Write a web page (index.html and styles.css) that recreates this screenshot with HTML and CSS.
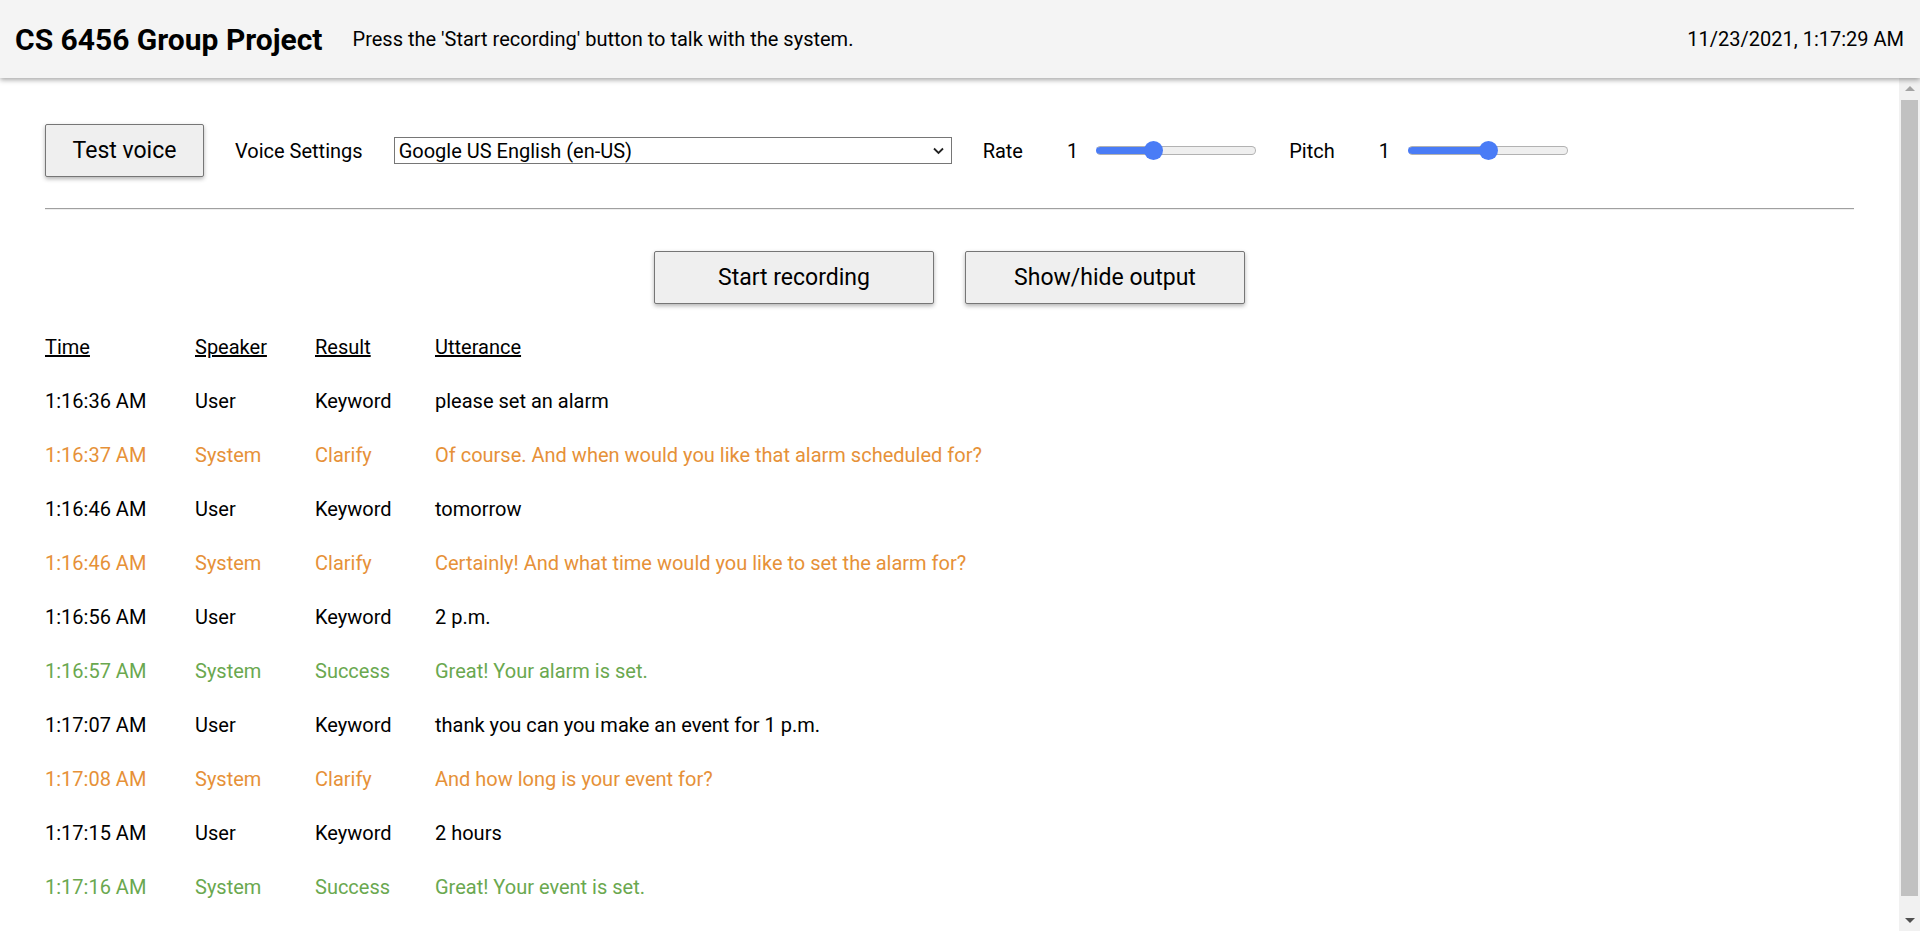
FILE: index.html
```html
<!DOCTYPE html>
<html lang="en">
<head>
<meta charset="utf-8">
<title>CS 6456 Group Project</title>
<link rel="stylesheet" href="styles.css">
</head>
<body>
<header class="topbar">
  <h1 class="title">CS 6456 Group Project</h1>
  <p class="subtitle">Press the 'Start recording' button to talk with the system.</p>
  <span class="clock">11/23/2021, 1:17:29 AM</span>
</header>
<div class="main">
  <main class="content">
    <div class="controls">
      <button class="btn btn-test">Test voice</button>
      <span class="label">Voice Settings</span>
      <div class="select">
        <span class="select-text">Google US English (en-US)</span>
        <svg class="chev" width="11" height="8" viewBox="0 0 11 8"><path d="M1 1.5 L5.5 6 L10 1.5" fill="none" stroke="#222" stroke-width="1.8"/></svg>
      </div>
      <div class="param">
        <span class="label">Rate</span>
        <span class="value">1</span>
        <input class="slider" type="range" min="0.5" max="2" step="0.1" value="1" style="--p: 57px">
      </div>
      <div class="param">
        <span class="label">Pitch</span>
        <span class="value">1</span>
        <input class="slider" type="range" min="0" max="2" step="0.1" value="1" style="--p: 80px">
      </div>
    </div>
    <hr class="rule">
    <div class="actions">
      <button class="btn btn-wide">Start recording</button>
      <button class="btn btn-wide">Show/hide output</button>
    </div>
    <div class="log">
      <div class="row head"><span>Time</span><span>Speaker</span><span>Result</span><span>Utterance</span></div>
      <div class="row"><span>1:16:36 AM</span><span>User</span><span>Keyword</span><span>please set an alarm</span></div>
      <div class="row clarify"><span>1:16:37 AM</span><span>System</span><span>Clarify</span><span>Of course. And when would you like that alarm scheduled for?</span></div>
      <div class="row"><span>1:16:46 AM</span><span>User</span><span>Keyword</span><span>tomorrow</span></div>
      <div class="row clarify"><span>1:16:46 AM</span><span>System</span><span>Clarify</span><span>Certainly! And what time would you like to set the alarm for?</span></div>
      <div class="row"><span>1:16:56 AM</span><span>User</span><span>Keyword</span><span>2 p.m.</span></div>
      <div class="row success"><span>1:16:57 AM</span><span>System</span><span>Success</span><span>Great! Your alarm is set.</span></div>
      <div class="row"><span>1:17:07 AM</span><span>User</span><span>Keyword</span><span>thank you can you make an event for 1 p.m.</span></div>
      <div class="row clarify"><span>1:17:08 AM</span><span>System</span><span>Clarify</span><span>And how long is your event for?</span></div>
      <div class="row"><span>1:17:15 AM</span><span>User</span><span>Keyword</span><span>2 hours</span></div>
      <div class="row success"><span>1:17:16 AM</span><span>System</span><span>Success</span><span>Great! Your event is set.</span></div>
    </div>
  </main>
  <div class="vscroll" aria-hidden="true">
    <div class="sb-btn"><span class="arrow-up"></span></div>
    <div class="sb-track"><div class="sb-thumb"></div></div>
    <div class="sb-btn"><span class="arrow-down"></span></div>
  </div>
</div>
</body>
</html>
```
FILE: styles.css
```css
* { box-sizing: border-box; }
html, body { height: 100%; }
body {
  margin: 0;
  font-family: Roboto, "Liberation Sans", sans-serif;
  color: #000;
  background: #fff;
  display: flex;
  flex-direction: column;
  overflow: hidden;
}
.topbar {
  position: relative;
  z-index: 2;
  flex: 0 0 78px;
  height: 78px;
  background: #f4f4f4;
  display: flex;
  align-items: center;
  padding: 0 16px 0 15px;
  box-shadow: 0 2px 5px rgba(0,0,0,0.35);
}
.title {
  margin: 0 30px 0 0;
  font-size: 30px;
  font-weight: 700;
}
.subtitle {
  margin: 0;
  font-size: 20px;
}
.clock {
  margin-left: auto;
  font-size: 20px;
}
.main {
  flex: 1 1 auto;
  min-height: 0;
  display: flex;
}
.content {
  flex: 1 1 auto;
  overflow: hidden;
  padding: 46px 0 46px 45px;
}
.vscroll {
  flex: 0 0 21px;
  width: 21px;
  background: #f1f1f1;
  display: flex;
  flex-direction: column;
}
.sb-btn {
  flex: 0 0 21px;
  height: 21px;
  display: flex;
  align-items: center;
  justify-content: center;
}
.arrow-up {
  width: 0;
  height: 0;
  border-left: 5px solid transparent;
  border-right: 5px solid transparent;
  border-bottom: 5px solid #a3a3a3;
}
.arrow-down {
  width: 0;
  height: 0;
  border-left: 5px solid transparent;
  border-right: 5px solid transparent;
  border-top: 5px solid #505050;
}
.sb-track {
  flex: 1 1 auto;
  padding: 1px 2px 14px 2px;
  display: flex;
}
.sb-thumb {
  flex: 1 1 auto;
  background: #c1c1c1;
}
.controls {
  width: 1809px;
  display: flex;
  align-items: center;
  gap: 31px;
  height: 53px;
}
.btn {
  font-family: Roboto, "Liberation Sans", sans-serif;
  font-size: 23px;
  color: #000;
  background: #efefef;
  border: 1px solid #767676;
  border-radius: 2px;
  height: 53px;
  padding: 0;
  box-shadow: 0 2px 4px rgba(0,0,0,0.3);
}
.btn-test { width: 159px; }
.btn-wide { width: 280px; }
.label, .value { font-size: 20px; }
.select {
  width: 558px;
  height: 27px;
  border: 1px solid #767676;
  display: flex;
  align-items: center;
  justify-content: space-between;
  padding: 0 7px 0 4px;
  font-size: 20px;
}
.chev { display: block; }
.param {
  display: flex;
  align-items: center;
}
.value { margin: 0 18px 0 44px; }
.slider {
  -webkit-appearance: none;
  appearance: none;
  margin: 0;
  width: 160px;
  height: 9px;
  border-radius: 5px;
  border: 1px solid #b2b2b2;
  border-left-color: #4a7cf6;
  background: linear-gradient(to right, #4a7cf6 var(--p), #efefef var(--p));
}
.slider::-webkit-slider-thumb {
  -webkit-appearance: none;
  appearance: none;
  width: 19px;
  height: 19px;
  border-radius: 50%;
  background: #4a7cf6;
  border: 0;
}
.param + .param { margin-left: 2px; }
.rule {
  width: 1809px;
  margin: 31px 0 0 0;
  border: 0;
  border-top: 1px solid #a0a0a0;
  border-bottom: 1px solid #eeeeee;
  height: 0;
}
.actions {
  width: 1809px;
  display: flex;
  justify-content: center;
  gap: 31px;
  margin-top: 41px;
}
.log {
  margin-top: 16px;
  font-size: 20px;
}
.row {
  display: grid;
  grid-template-columns: 150px 120px 120px 1fr;
  align-items: center;
  height: 54px;
}
.row.head span { text-decoration: underline; }
.row.clarify { color: #e69138; }
.row.success { color: #6aa84f; }
```
